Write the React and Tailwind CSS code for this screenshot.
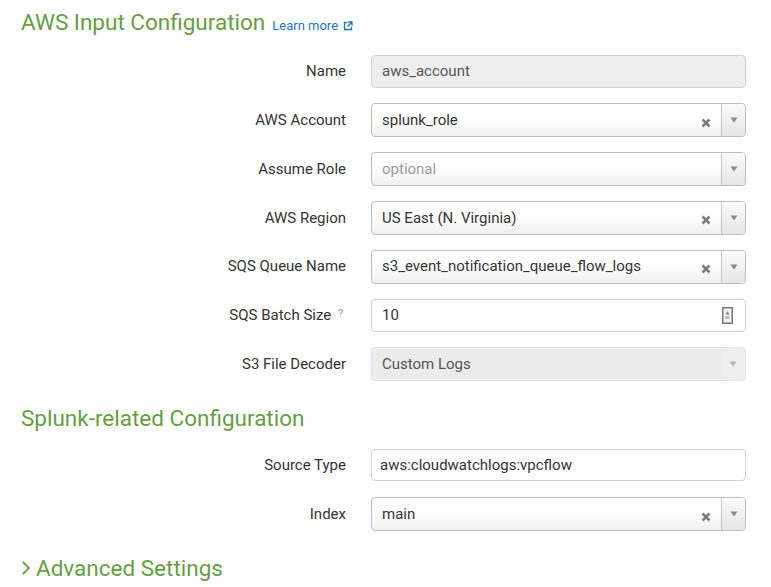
import React from "react";

const font = { fontFamily: "Roboto, 'Liberation Sans', sans-serif" };

function Arrow({ faded }) {
  return (
    <svg width="8" height="6" viewBox="0 0 8 6">
      <path d="M0.5 0.5 L7.5 0.5 L4 5.5 Z" fill={faded ? "#b5b5b5" : "#8a8a8a"} />
    </svg>
  );
}

function Clear() {
  return (
    <svg width="10" height="10" viewBox="0 0 10 10">
      <path d="M1.5 1.5 L8.5 8.5 M8.5 1.5 L1.5 8.5" stroke="#7d7d7d" strokeWidth="2.6" strokeLinecap="butt" />
    </svg>
  );
}

function Label({ children, extra }) {
  return (
    <div className="w-[325px] flex justify-end items-center text-[15px] text-[#333]">
      <span>{children}</span>
      {extra}
    </div>
  );
}

function Row({ label, extra, children, className = "" }) {
  return (
    <div className={"flex items-center gap-[25px] h-[33px] pl-[21px] " + className}>
      <Label extra={extra}>{label}</Label>
      {children}
    </div>
  );
}

function TextBox({ value, disabled }) {
  return (
    <div
      className={
        "w-[375px] h-[33px] rounded-[4px] border flex items-center px-[10px] text-[15px] " +
        (disabled ? "bg-[#eeeeee] border-[#d2d2d2] text-[#555]" : "bg-white border-[#cfcfcf] text-[#333]")
      }
    >
      {value}
    </div>
  );
}

function Select({ value, placeholder, clear }) {
  return (
    <div className="w-[375px] h-[34px] rounded-[4px] border border-[#bdbdbd] flex bg-gradient-to-b from-white from-50% to-[#efefef] overflow-hidden">
      <div className="flex-1 flex items-center pl-[10px] text-[15px]">
        {value ? <span className="text-[#333]">{value}</span> : <span className="text-[#9a9a9a]">{placeholder}</span>}
      </div>
      {clear && (
        <div className="w-[20px] flex items-center justify-start pt-[5px]">
          <Clear />
        </div>
      )}
      <div className="w-[24px] border-l border-[#c4c4c4] flex items-center justify-center bg-gradient-to-b from-[#fbfbfb] to-[#e6e6e6]">
        <Arrow />
      </div>
    </div>
  );
}

function DisabledSelect({ value }) {
  return (
    <div className="w-[375px] h-[34px] rounded-[4px] border border-[#e0e0e0] flex bg-[#ececec] overflow-hidden">
      <div className="flex-1 flex items-center pl-[10px] text-[15px] text-[#555]">{value}</div>
      <div className="w-[24px] flex items-center justify-center bg-[#efefef]">
        <Arrow faded />
      </div>
    </div>
  );
}

function NumberBox({ value }) {
  return (
    <div className="w-[375px] h-[33px] rounded-[4px] border border-[#cfcfcf] flex items-center bg-white pl-[10px] pr-[12px] text-[15px] text-[#333]">
      <span className="flex-1">{value}</span>
      <svg width="11" height="17" viewBox="0 0 11 17">
        <rect x="0.75" y="0.75" width="9.5" height="15.5" fill="#f2f2f2" stroke="#777" strokeWidth="1.5" />
        <path d="M5.5 4 L7.5 7.5 L3.5 7.5 Z" fill="#888" />
        <rect x="3.5" y="9" width="4" height="3" fill="#bbb" />
      </svg>
    </div>
  );
}

export default function App() {
  return (
    <div className="w-[771px] h-[587px] bg-white overflow-hidden" style={font}>
      <div className="pl-[21px] pt-[8px] flex items-end gap-[7px]">
        <h1 className="text-[22.5px] leading-[28px] text-[#65a03f]">AWS Input Configuration</h1>
        <a className="text-[13px] leading-[22px] text-[#1f74bc] flex items-center gap-[5px] mb-[-1px]">
          Learn more
          <svg width="10" height="10" viewBox="0 0 10 10">
            <path d="M4 1.5 H1.5 V8.5 H8.5 V6" fill="none" stroke="#1f74bc" strokeWidth="1.3" />
            <path d="M5 1 H9 V5 M9 1 L4.5 5.5" fill="none" stroke="#1f74bc" strokeWidth="1.3" />
          </svg>
        </a>
      </div>

      <div className="flex flex-col gap-[15.8px] mt-[19px]">
        <Row label="Name">
          <TextBox value="aws_account" disabled />
        </Row>
        <Row label="AWS Account">
          <Select value="splunk_role" clear />
        </Row>
        <Row label="Assume Role">
          <Select placeholder="optional" />
        </Row>
        <Row label="AWS Region">
          <Select value="US East (N. Virginia)" clear />
        </Row>
        <Row label="SQS Queue Name">
          <Select value="s3_event_notification_queue_flow_logs" clear />
        </Row>
        <Row
          label="SQS Batch Size"
          extra={<span className="text-[10px] text-[#7a9fc0] self-start ml-[7px] mt-[2px] mr-[3px]">?</span>}
        >
          <NumberBox value="10" />
        </Row>
        <Row label="S3 File Decoder">
          <DisabledSelect value="Custom Logs" />
        </Row>
      </div>

      <h2 className="pl-[21px] mt-[23px] text-[22.5px] leading-[28px] text-[#65a03f]">Splunk-related Configuration</h2>

      <div className="flex flex-col gap-[16px] mt-[17px]">
        <Row label="Source Type">
          <div className="w-[375px] h-[32px] rounded-[4px] border border-[#d2d2d2] flex items-center text-[15px] text-[#333] bg-white pl-[8px]">
            aws:cloudwatchlogs:vpcflow
          </div>
        </Row>
        <Row label="Index">
          <Select value="main" clear />
        </Row>
      </div>

      <div className="pl-[21px] mt-[23px] text-[22.5px] leading-[28px] text-[#65a03f] flex items-center gap-[5px]">
        <svg width="10" height="16" viewBox="0 0 10 16">
          <path d="M2 2 L8 8 L2 14" fill="none" stroke="#65a03f" strokeWidth="1.8" />
        </svg>
        <span>Advanced Settings</span>
      </div>
    </div>
  );
}
